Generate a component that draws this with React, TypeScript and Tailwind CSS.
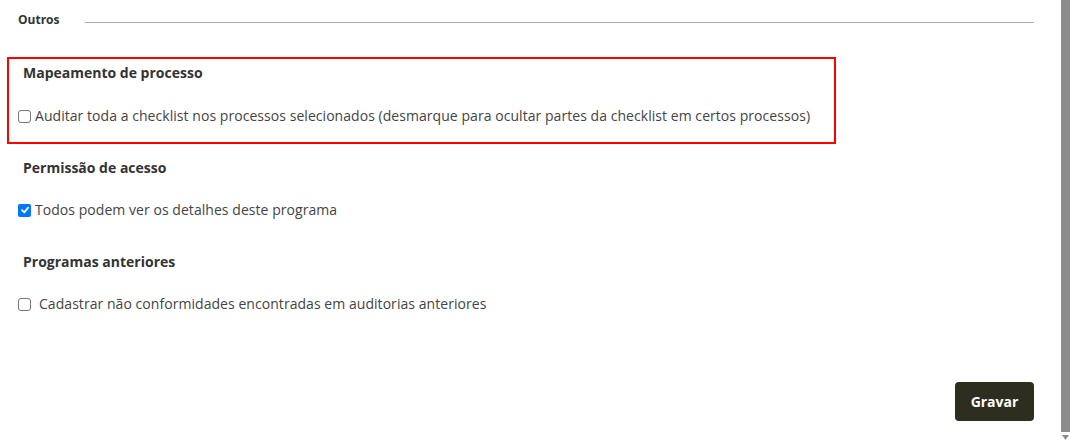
import React from "react";

const font = { fontFamily: '"Open Sans", "Noto Sans", sans-serif' };

function Box({ checked }: { checked?: boolean }) {
  if (checked) {
    return (
      <span className="inline-flex h-[13px] w-[13px] shrink-0 items-center justify-center rounded-[2px] bg-[#0075ff]">
        <svg width="10" height="10" viewBox="0 0 10 10">
          <path d="M2 5.2 L4.2 7.3 L8.2 2.6" stroke="white" strokeWidth="1.8" fill="none" strokeLinecap="round" strokeLinejoin="round" />
        </svg>
      </span>
    );
  }
  return <span className="inline-block h-[13px] w-[13px] shrink-0 rounded-[3px] border border-[#767676] bg-white" />;
}

export default function App() {
  return (
    <div className="flex h-[443px] w-[1070px] overflow-hidden bg-white text-[#333]" style={font}>
      <div className="flex flex-1 flex-col">
        <div className="flex items-center pl-[18px] pr-[27px] pt-[11px]">
          <span className="text-[12px] font-bold leading-[18px] text-[#333]">Outros</span>
          <div className="ml-[25px] mt-[4px] h-px flex-1 bg-[#aaa]" />
        </div>
        <div className="ml-[7px] mt-[28px] h-[87px] w-[829px] border-2 border-[#f00] pl-[9px]">
          <div className="mt-[4px] pl-[5px] text-[14px] font-bold leading-[20px]">Mapeamento de processo</div>
          <label className="mt-[23px] flex items-center gap-[4px] text-[14px] leading-[20px] text-[#444]">
            <Box />
            <span className="tracking-[0.05px]">Auditar toda a checklist nos processos selecionados (desmarque para ocultar partes da checklist em certos processos)</span>
          </label>
        </div>
        <div className="pl-[23px] mt-[14px] text-[14px] font-bold leading-[20px]">Permissão de acesso</div>
        <label className="ml-[18px] mt-[22px] flex items-center gap-[4px] text-[14px] leading-[20px] text-[#444]">
          <Box checked />
          <span className="tracking-[0.05px]">Todos podem ver os detalhes deste programa</span>
        </label>
        <div className="pl-[23px] mt-[32px] text-[14px] font-bold leading-[20px]">Programas anteriores</div>
        <label className="ml-[18px] mt-[22px] flex items-center gap-[8px] text-[14px] leading-[20px] text-[#444]">
          <Box />
          <span className="tracking-[0.05px]">Cadastrar não conformidades encontradas em auditorias anteriores</span>
        </label>
        <div className="mt-[68px] flex justify-end pr-[27px]">
          <button className="h-[39px] w-[79px] rounded-[4px] bg-[#2e2e20] text-[14px] font-bold text-white">Gravar</button>
        </div>
      </div>
      <div className="flex w-[9px] flex-col items-center">
        <div className="h-[432px] w-[9px] bg-[#8c8c8c]" />
        <svg width="9" height="9" viewBox="0 0 9 9" className="mt-[2px]">
          <path d="M1 1 L8 1 L4.5 6 Z" fill="#8c8c8c" />
        </svg>
      </div>
    </div>
  );
}
